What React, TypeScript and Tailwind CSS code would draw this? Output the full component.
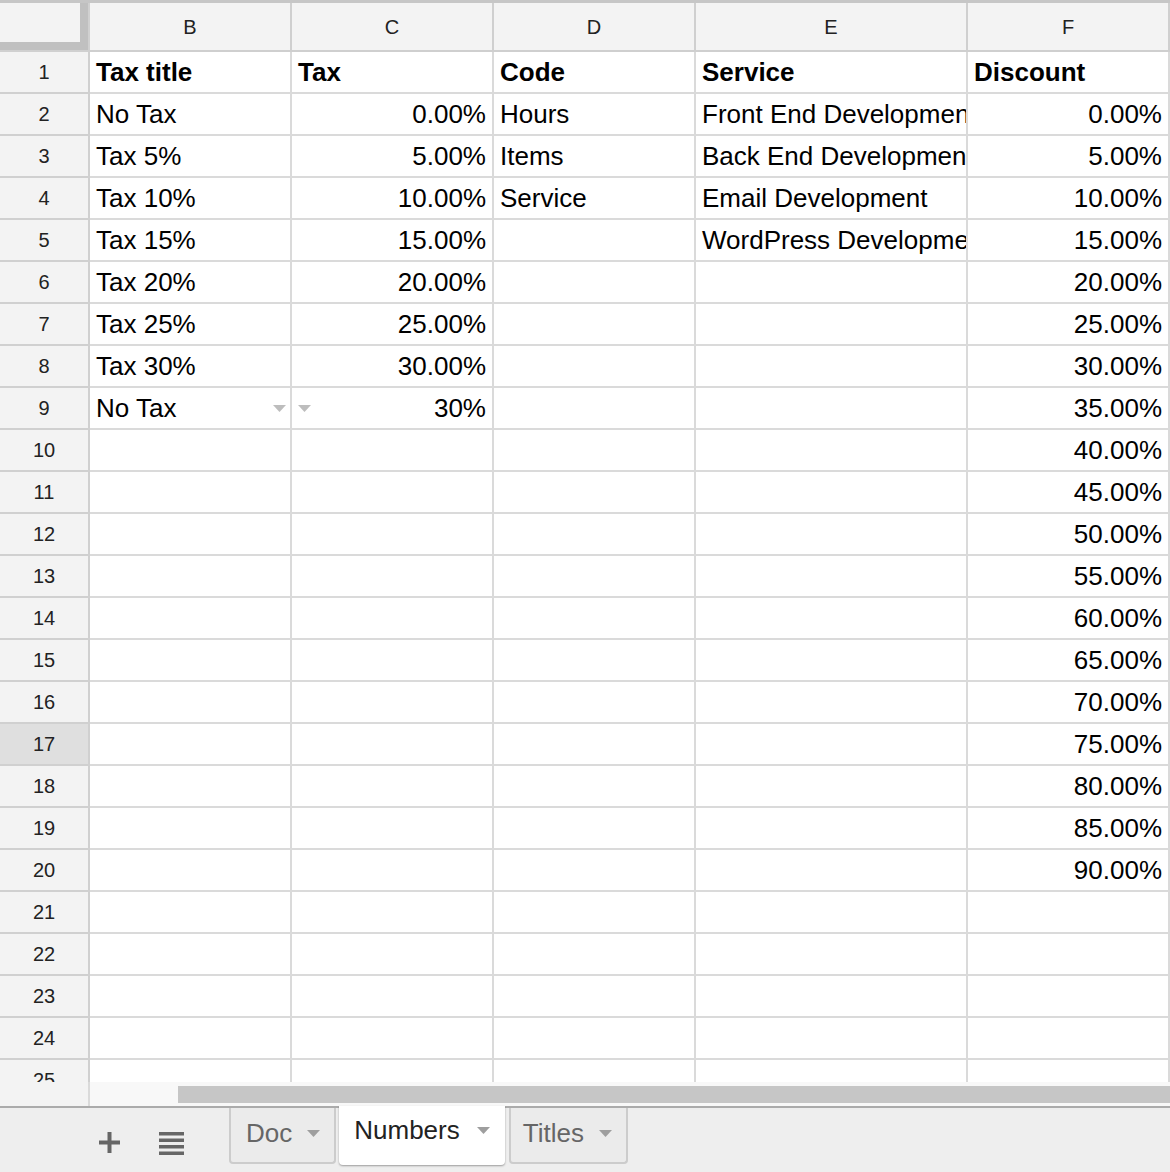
import React from "react"

const colWidths = ["w-[202px]", "w-[202px]", "w-[202px]", "w-[272px]", "w-[202px]"]
const letters = ["B", "C", "D", "E", "F"]

type Row = (string | null)[]

const rows: Row[] = [
  ["Tax title", "Tax", "Code", "Service", "Discount"],
  ["No Tax", "0.00%", "Hours", "Front End Development", "0.00%"],
  ["Tax 5%", "5.00%", "Items", "Back End Development", "5.00%"],
  ["Tax 10%", "10.00%", "Service", "Email Development", "10.00%"],
  ["Tax 15%", "15.00%", null, "WordPress Development", "15.00%"],
  ["Tax 20%", "20.00%", null, null, "20.00%"],
  ["Tax 25%", "25.00%", null, null, "25.00%"],
  ["Tax 30%", "30.00%", null, null, "30.00%"],
  ["No Tax", "30%", null, null, "35.00%"],
  [null, null, null, null, "40.00%"],
  [null, null, null, null, "45.00%"],
  [null, null, null, null, "50.00%"],
  [null, null, null, null, "55.00%"],
  [null, null, null, null, "60.00%"],
  [null, null, null, null, "65.00%"],
  [null, null, null, null, "70.00%"],
  [null, null, null, null, "75.00%"],
  [null, null, null, null, "80.00%"],
  [null, null, null, null, "85.00%"],
  [null, null, null, null, "90.00%"],
  [null, null, null, null, null],
  [null, null, null, null, null],
  [null, null, null, null, null],
  [null, null, null, null, null],
  [null, null, null, null, null],
]

// columns C and F hold numbers, so they sit on the right
const rightAligned = [false, true, false, false, true]

function Caret({ className }: { className: string }) {
  return (
    <svg width="13" height="7" viewBox="0 0 13 7" className={className}>
      <path d="M0 0 H13 L6.5 7 Z" fill="currentColor" />
    </svg>
  )
}

function Cell({ value, col, rowIndex }: { value: string | null; col: number; rowIndex: number }) {
  const bold = rowIndex === 0
  const dropdown = rowIndex === 8 && (col === 0 || col === 1)

  if (dropdown && col === 0) {
    return (
      <div className={`${colWidths[col]} h-full shrink-0 border-r-2 border-b-2 border-[#dadada] flex items-center justify-between pl-[6px] pr-[4px]`}>
        <span className="whitespace-nowrap">{value}</span>
        <Caret className="text-[#bdbdbd]" />
      </div>
    )
  }
  if (dropdown && col === 1) {
    return (
      <div className={`${colWidths[col]} h-full shrink-0 border-r-2 border-b-2 border-[#dadada] flex items-center justify-between pl-[6px] pr-[6px]`}>
        <Caret className="text-[#bdbdbd]" />
        <span className="whitespace-nowrap">{value}</span>
      </div>
    )
  }

  return (
    <div
      className={`${colWidths[col]} h-full shrink-0 border-r-2 border-b-2 border-[#dadada] flex items-center overflow-hidden whitespace-nowrap pl-[6px] pr-[6px] ${
        rightAligned[col] && !bold ? "justify-end" : "justify-start"
      } ${bold ? "font-bold" : ""}`}
    >
      {value}
    </div>
  )
}

function PlusIcon() {
  return (
    <svg width="21" height="21" viewBox="0 0 21 21">
      <rect x="8.5" y="0" width="4" height="21" fill="#666" />
      <rect x="0" y="8.5" width="21" height="4" fill="#666" />
    </svg>
  )
}

function ListIcon() {
  return (
    <svg width="25" height="23" viewBox="0 0 25 23">
      <rect x="0" y="0" width="25" height="3.5" fill="#666" />
      <rect x="0" y="6.5" width="25" height="3.5" fill="#666" />
      <rect x="0" y="13" width="25" height="3.5" fill="#666" />
      <rect x="0" y="19.5" width="25" height="3.5" fill="#666" />
    </svg>
  )
}

export default function App() {
  return (
    <div className="w-[1170px] h-[1172px] bg-white overflow-hidden flex flex-col font-['Liberation_Sans',Arial,sans-serif]">
      {/* Grid */}
      <div className="h-[1082px] overflow-hidden shrink-0">
        <div className="h-[3px] bg-[#c6c6c6]" />

        {/* Column headers */}
        <div className="flex h-[49px]">
          <div className="w-[90px] h-full shrink-0 border-r-2 border-b-2 border-[#d0d0d0] bg-[#f3f3f3]">
            <div className="w-[88px] h-[47px] border-r-8 border-b-8 border-[#c0c0c0]" />
          </div>
          {letters.map((l, i) => (
            <div
              key={l}
              className={`${colWidths[i]} h-full shrink-0 border-r-2 border-b-2 border-[#cfcfcf] bg-[#f3f3f3] flex items-center justify-center text-[20px] text-[#222]`}
            >
              {l}
            </div>
          ))}
        </div>

        {/* Rows */}
        {rows.map((row, r) => (
          <div key={r} className="flex h-[42px] text-[26px] text-black">
            <div
              className={`w-[90px] h-full shrink-0 border-r-2 border-b-2 border-[#d0d0d0] flex items-center justify-center text-[20px] text-[#222] ${
                r === 16 ? "bg-[#dfdfdf]" : "bg-[#f3f3f3]"
              }`}
            >
              {r + 1}
            </div>
            {row.map((v, c) => (
              <Cell key={c} value={v} col={c} rowIndex={r} />
            ))}
          </div>
        ))}
      </div>

      {/* Horizontal scrollbar */}
      <div className="flex h-[24px] shrink-0 bg-[#f8f8f8]">
        <div className="w-[90px] h-full border-r-2 border-[#dadada] bg-[#f3f3f3]" />
        <div className="flex-1 pl-[88px] pt-[4px]">
          <div className="h-[17px] bg-[#c6c6c6]" />
        </div>
      </div>

      {/* Sheet tabs */}
      <div className="flex-1 border-t-2 border-[#ababab] bg-[#eeeeee] flex items-start pl-[99px]">
        <div className="mt-[24px]">
          <PlusIcon />
        </div>
        <div className="mt-[24px] ml-[39px]">
          <ListIcon />
        </div>

        <div className="ml-[45px] h-[56px] border-x-2 border-b-2 border-[#cccccc] rounded-b-[4px] bg-[#ebebeb] flex items-start pl-[15px] pr-[14px] pt-[10px] text-[26px] leading-[30px] text-[#666]">
          <span>Doc</span>
          <span className="ml-[15px] h-[30px] flex items-center">
            <Caret className="text-[#9e9e9e]" />
          </span>
        </div>

        <div className="-mt-[2px] ml-[3px] h-[59px] bg-white rounded-b-[4px] shadow-[0_1px_2px_rgba(0,0,0,0.35)] flex items-start pl-[15px] pr-[15px] pt-[9px] text-[26px] leading-[30px] text-[#222]">
          <span>Numbers</span>
          <span className="ml-[17px] h-[30px] flex items-center">
            <Caret className="text-[#9e9e9e]" />
          </span>
        </div>

        <div className="ml-[4px] h-[56px] border-x-2 border-b-2 border-[#cccccc] rounded-b-[4px] bg-[#ebebeb] flex items-start pl-[12px] pr-[14px] pt-[10px] text-[26px] leading-[30px] text-[#666]">
          <span>Titles</span>
          <span className="ml-[15px] h-[30px] flex items-center">
            <Caret className="text-[#9e9e9e]" />
          </span>
        </div>
      </div>
    </div>
  )
}
